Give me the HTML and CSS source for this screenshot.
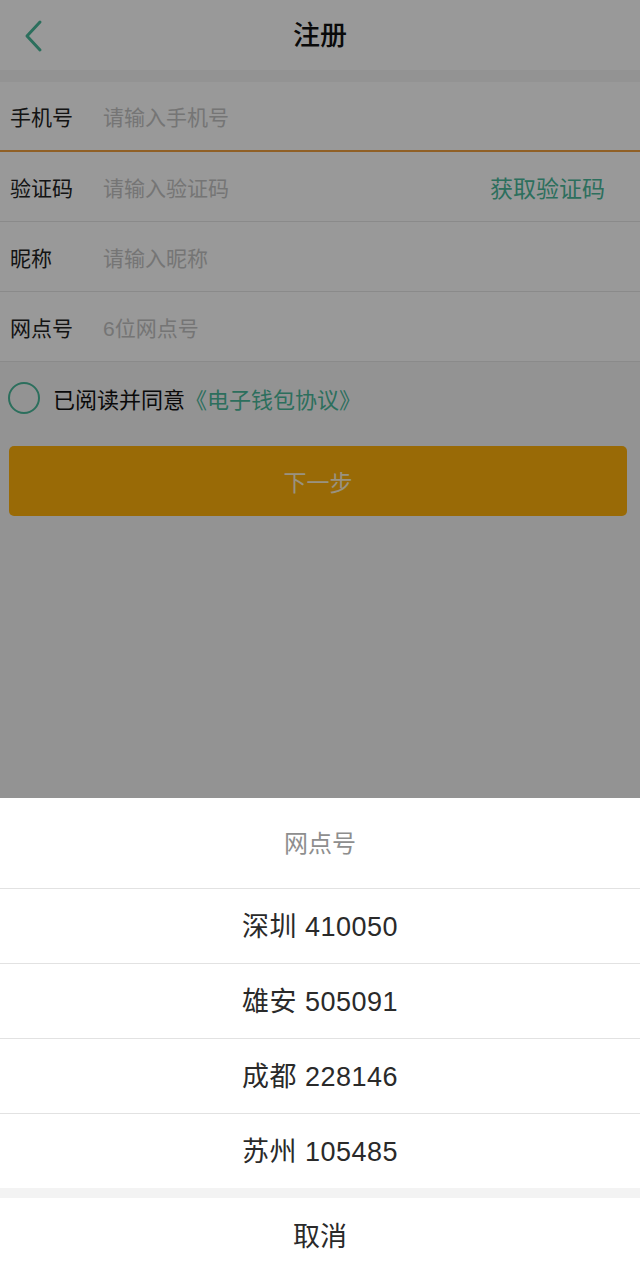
FILE: index.html
```html
<!DOCTYPE html>
<html lang="zh">
<head>
<meta charset="utf-8">
<title>注册</title>
<link rel="stylesheet" href="styles.css">
</head>
<body>
<div class="page">
  <header class="nav">
    <svg class="back" width="24" height="34" viewBox="0 0 24 34"><path d="M18 3 L5 17 L18 31" fill="none" stroke="#4ab99b" stroke-width="3" stroke-linecap="round" stroke-linejoin="round"/></svg>
    <h1 class="title">注册</h1>
  </header>
  <div class="band"></div>
  <div class="form">
    <div class="row focus"><span class="label">手机号</span><span class="ph">请输入手机号</span></div>
    <div class="row"><span class="label">验证码</span><span class="ph">请输入验证码</span><span class="code">获取验证码</span></div>
    <div class="row"><span class="label">昵称</span><span class="ph">请输入昵称</span></div>
    <div class="row"><span class="label">网点号</span><span class="ph">6位网点号</span></div>
  </div>
  <div class="agree"><span class="circle"></span><span class="atext">已阅读并同意</span><span class="link">《电子钱包协议》</span></div>
  <div class="btnwrap"><div class="btn">下一步</div></div>
</div>
<div class="mask"></div>
<div class="sheet">
  <div class="stitle">网点号</div>
  <div class="opt">深圳 410050</div>
  <div class="opt">雄安 505091</div>
  <div class="opt">成都 228146</div>
  <div class="opt last">苏州 105485</div>
  <div class="gap"></div>
  <div class="cancel">取消</div>
</div>
</body>
</html>
```
FILE: styles.css
```css
* { box-sizing: border-box; margin: 0; padding: 0; }
html, body { width: 640px; height: 1274px; overflow: hidden; }
body {
  font-family: "Liberation Sans", "Noto Sans CJK SC", sans-serif;
  background: #f5f5f5;
  position: relative;
  color: #222;
}
.page { background: #f5f5f5; height: 1274px; }
.nav {
  height: 70px;
  background: #ffffff;
  display: flex;
  align-items: center;
  justify-content: center;
  position: relative;
}
.back { position: absolute; left: 22px; top: 19px; }
.title { font-size: 27px; font-weight: 500; color: #111; line-height: 1; padding-top: 3px; }
.band { height: 12px; background: #f5f5f5; }
.form { background: #fff; }
.row {
  height: 70px;
  display: flex;
  align-items: center;
  padding: 0 10px;
  border-bottom: 1px solid #e6e6e6;
}
.row.focus { border-bottom: 2px solid #f0a040; }
.label { width: 93px; font-size: 21px; color: #222; }
.ph { flex: 1; font-size: 21px; color: #c4c4c4; }
.code { font-size: 23px; color: #4ab99b; margin-right: 25px; }
.agree {
  display: flex;
  align-items: center;
  height: 72px;
  padding-left: 8px;
}
.circle {
  width: 32px; height: 32px;
  border: 2.5px solid #4ab99b;
  border-radius: 50%;
  margin-right: 13px;
}
.atext { font-size: 22px; color: #111; }
.link { font-size: 22px; color: #4ab99b; }
.btnwrap { padding: 12px 13px 0 9px; }
.btn {
  height: 70px;
  background: #ffb10b;
  border-radius: 5px;
  display: flex;
  align-items: center;
  justify-content: center;
  font-size: 23px;
  color: #fff4d8;
}
.mask {
  position: absolute;
  inset: 0;
  background: rgba(0, 0, 0, 0.4);
}
.sheet {
  position: absolute;
  left: 0; right: 0; bottom: 0;
  height: 476px;
  background: #fff;
  display: flex;
  flex-direction: column;
}
.stitle {
  height: 91px;
  display: flex;
  align-items: center;
  justify-content: center;
  font-size: 24px;
  color: #8e8e8e;
  border-bottom: 1px solid #e2e2e2;
  padding-bottom: 4px;
}
.opt {
  height: 75px;
  display: flex;
  align-items: center;
  justify-content: center;
  font-size: 27px;
  letter-spacing: 0.5px;
  color: #2a2a2a;
  border-bottom: 1px solid #e2e2e2;
  padding-bottom: 3px;
}
.opt.last { border-bottom: none; height: 74px; }
.gap { height: 10px; background: #f3f3f3; }
.cancel {
  flex: 1;
  display: flex;
  align-items: center;
  justify-content: center;
  font-size: 27px;
  color: #2a2a2a;
  padding-bottom: 4px;
}
```
